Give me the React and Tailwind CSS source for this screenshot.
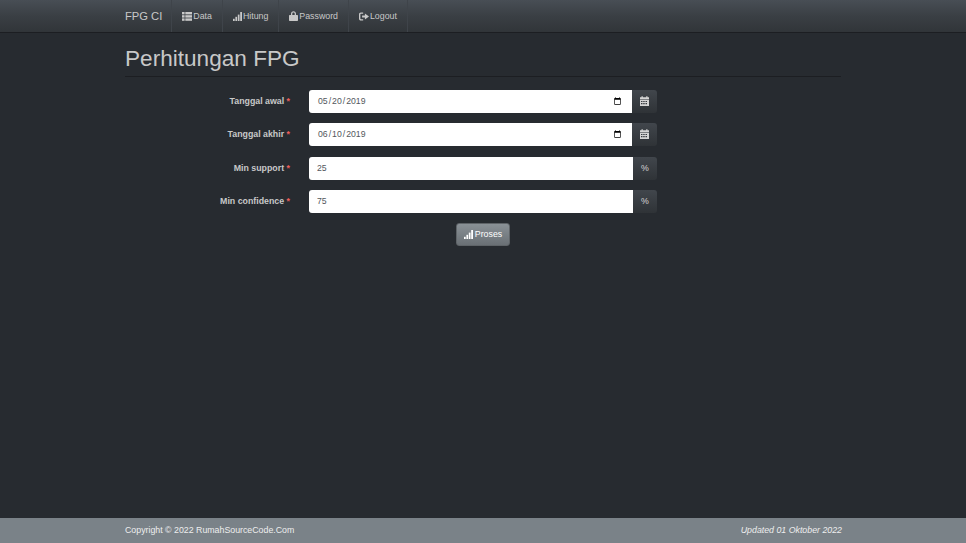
import React from "react";

const IconList = () => (
  <svg width="10" height="9" viewBox="0 0 10 9" fill="currentColor">
    <rect x="0" y="0" width="2.6" height="2.400" />
    <rect x="3.3" y="0" width="6.7" height="2.400" />
    <rect x="0" y="3.2" width="2.6" height="2.400" />
    <rect x="3.3" y="3.2" width="6.7" height="2.400" />
    <rect x="0" y="6.4" width="2.6" height="2.400" />
    <rect x="3.3" y="6.4" width="6.7" height="2.400" />
  </svg>
);

const IconSignal = () => (
  <svg width="9" height="9" viewBox="0 0 9 9" fill="currentColor">
    <rect x="0" y="6.800" width="1.700" height="2.200" />
    <rect x="2.400" y="4.800" width="1.700" height="4.200" />
    <rect x="4.800" y="2.600" width="1.700" height="6.400" />
    <rect x="7.200" y="0" width="1.800" height="9" />
  </svg>
);

const IconLock = () => (
  <svg width="9" height="10" viewBox="0 0 9 10" fill="currentColor">
    <path d="M2 4V2.800C2 1.300 3.100.3 4.500.3S7 1.300 7 2.800V4h1.300c.4 0 .7.3.7.7v4.500c0 .4-.3.7-.7.7H.7c-.4 0-.7-.3-.7-.7V4.700c0-.4.3-.7.700-.7zm1.300 0h2.400V2.800c0-.7-.5-1.200-1.200-1.200s-1.200.5-1.200 1.200z" />
  </svg>
);

const IconLogout = () => (
  <svg width="10" height="9" viewBox="0 0 11 9" fill="currentColor">
    <path d="M0 2C0 .9.9 0 2 0h2.600v1.500H2.200c-.4 0-.7.300-.7.700v4.600c0 .4.300.7.700.7h2.400V9H2C.9 9 0 8.100 0 7z" />
    <path d="M6.500 1.300L11 4.500 6.500 7.700V5.600H3.400V3.400h3.100z" />
  </svg>
);

const IconCalendar = () => (
  <svg className="-mt-[1px]" width="9" height="10" viewBox="0 0 9 10" fill="currentColor">
    <path d="M0 1.300h1.500V.2h1.300v1.100h3.400V.2h1.300v1.100H9v2H0z" />
    <path fillRule="evenodd" d="M0 3.800h9V10H0zM1 5v1.100h1.500V5zm2.200 0v1.100h1.500V5zm2.300 0v1.100H7V5zM1 7v1.200h1.500V7zm2.200 0v1.200h1.500V7zm2.300 0v1.200H7V7z" />
  </svg>
);

const NavItem = ({ icon, label }) => (
  <a className="flex h-full items-center gap-[1px] border-l border-[#3f444a] px-[10px] text-[8.800px] text-[#c8c8c8]">
    {icon}
    <span className="pt-[1px]">{label}</span>
  </a>
);

const Field = ({ label, type, value, addon, addonWidth }) => (
  <div className="flex h-[23px] items-center">
    <label className="w-[165px] text-right text-[8.800px] font-bold text-[#c8c8c8]">
      {label} <span className="text-[#ee5f5b]">*</span>
    </label>
    <div className="ml-[19px] flex h-full w-[348px]">
      <input
        type={type}
        defaultValue={value}
        className="h-full min-w-0 flex-1 rounded-l-[3px] bg-white px-[8px] text-[8.700px] text-[#52575c] outline-none"
      />
      <span className={`flex h-full ${addonWidth} items-center justify-center rounded-r-[3px] bg-gradient-to-b from-[#41464c] to-[#2f3337] text-[8.800px] text-[#d4d4d4]`}>
        {addon}
      </span>
    </div>
  </div>
);

export default function App() {
  return (
    <div
      className="flex h-[543px] flex-col overflow-hidden bg-[#272b30] text-[#c8c8c8]"
      style={{ fontFamily: '"Liberation Sans", Arial, sans-serif' }}
    >
      <nav className="h-[33px] shrink-0 border-b border-[#1c1e22] bg-gradient-to-b from-[#484e55] via-[#3a3f44] to-[#313539] pl-[125px]">
        <div className="flex h-full items-center">
          <a className="pr-[9px] text-[11.200px] text-[#c8c8c8]">FPG CI</a>
          <NavItem icon={<IconList />} label="Data" />
          <NavItem icon={<IconSignal />} label="Hitung" />
          <NavItem icon={<IconLock />} label="Password" />
          <div className="h-full border-r border-[#3f444a]">
            <NavItem icon={<IconLogout />} label="Logout" />
          </div>
        </div>
      </nav>

      <main className="flex-1 pr-[125px] pl-[125px]">
        <h1 className="mt-[12px] h-[32px] border-b border-[#1c1e22] text-[22.600px] leading-[28px] font-normal text-[#c8c8c8]">
          Perhitungan FPG
        </h1>
        <form className="mt-[13px] flex flex-col gap-[10.300px]">
          <Field label="Tanggal awal" type="date" value="2019-05-20" addon={<IconCalendar />} addonWidth="w-[25px]" />
          <Field label="Tanggal akhir" type="date" value="2019-06-10" addon={<IconCalendar />} addonWidth="w-[25px]" />
          <Field label="Min support" type="text" value="25" addon="%" addonWidth="w-[24px]" />
          <Field label="Min confidence" type="text" value="75" addon="%" addonWidth="w-[24px]" />
          <div className="pl-[331px]">
            <button
              type="button"
              className="flex h-[23px] w-[54px] items-center justify-center gap-[2px] rounded-[3px] border border-[#5f6468] bg-gradient-to-b from-[#8a9196] to-[#6a7075] text-[8.800px] text-white"
            >
              <IconSignal />
              Proses
            </button>
          </div>
        </form>
      </main>

      <footer className="flex h-[25px] shrink-0 items-center justify-between bg-[#7a8288] pr-[124px] pl-[125px] text-[8.800px] text-[#eeeeee]">
        <span>Copyright © 2022 RumahSourceCode.Com</span>
        <em>Updated 01 Oktober 2022</em>
      </footer>
    </div>
  );
}
